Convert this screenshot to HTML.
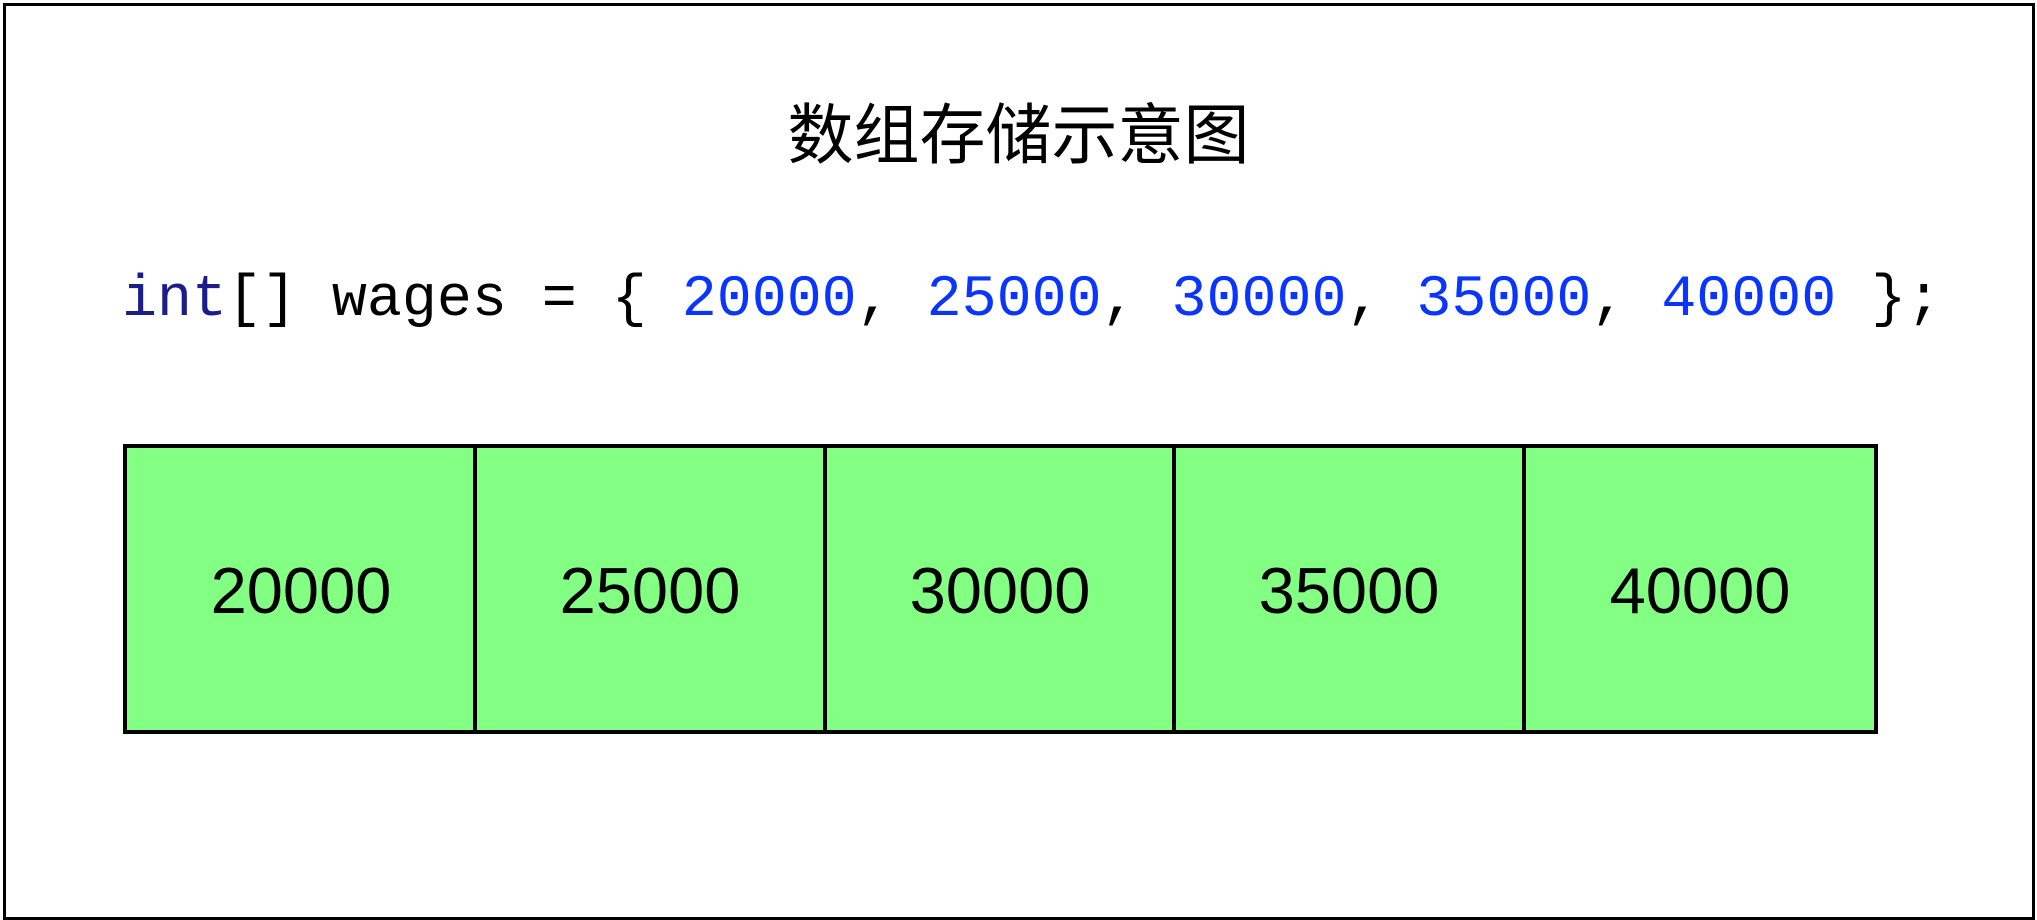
<!DOCTYPE html>
<html><head><meta charset="utf-8"><style>
html,body{margin:0;padding:0;background:#fff;}
body{width:2037px;height:920px;position:relative;overflow:hidden;}
.frame{position:absolute;left:3px;top:3px;width:2026px;height:911px;border:3px solid #000;}
.title{position:absolute;left:0;width:2037px;top:97px;text-align:center;font-family:"Liberation Sans","Noto Sans CJK SC",sans-serif;font-size:66px;line-height:76px;color:#000;}
.code{position:absolute;left:122px;top:265px;font-family:"Liberation Mono",monospace;font-size:58.3px;line-height:70px;white-space:pre;color:#000;}
.kw{color:#1c1c8a}.n{color:#0a35ff}
.box{position:absolute;top:444px;background:#83ff83;border:4px solid #000;box-sizing:content-box;display:flex;align-items:center;justify-content:center;font-family:"Liberation Sans",sans-serif;font-size:65px;color:#000;padding-top:2px;height:280px;}
</style></head><body>
<div class="frame"></div>
<div class="title">数组存储示意图</div>
<div class="code"><span class="kw">int</span>[] wages = { <span class="n">20000</span>, <span class="n">25000</span>, <span class="n">30000</span>, <span class="n">35000</span>, <span class="n">40000</span> };</div>
<div class="box" style="left:123px;width:348px;">20000</div>
<div class="box" style="left:473px;width:346px;">25000</div>
<div class="box" style="left:823px;width:346px;">30000</div>
<div class="box" style="left:1172px;width:346px;">35000</div>
<div class="box" style="left:1522px;width:348px;">40000</div>
</body></html>
